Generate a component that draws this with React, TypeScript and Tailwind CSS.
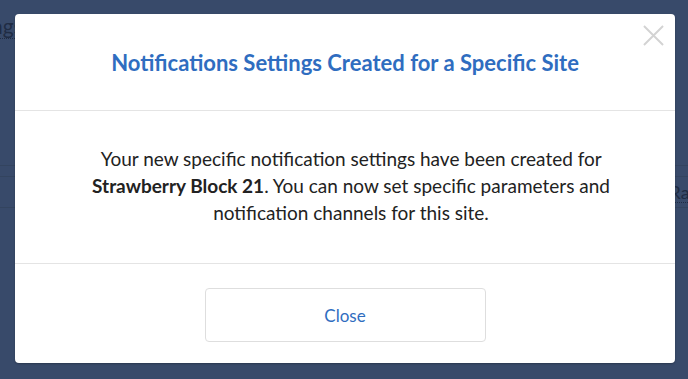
export default function App() {
  return (
    <div
      className="relative h-[379px] w-[688px] overflow-hidden bg-[#384a6a]"
      style={{ fontFamily: "Lato, 'Noto Sans', sans-serif" }}
    >
      {/* page behind the overlay */}
      <div className="flex h-full flex-col">
        <div className="flex h-[52px] items-center">
          <span className="-ml-[9px] border-b border-dotted border-[#1f2c44] text-[21px] leading-[24px] text-[#1f2c44]">
            ngs
          </span>
        </div>
        <div className="h-[114px] border-b border-[#33445f]" />
        <div className="flex h-[11px] border-b border-[#33445f]" />
        <div className="flex h-[31px] items-center justify-end border-b border-[#33445f]">
          <span className="-mr-[8px] border-b border-dotted border-[#1f2c44] text-[18px] leading-[20px] text-[#1f2c44]">
            Rat
          </span>
        </div>
      </div>

      {/* modal */}
      <div className="absolute left-[15px] top-[14px] flex h-[349px] w-[660px] flex-col rounded-[4px] bg-white shadow-[0_1px_2px_rgba(0,0,0,0.25)]">
        <button className="absolute right-[11px] top-[11px] h-[21px] w-[21px] text-[#d3d3d3]">
          <svg viewBox="0 0 22 22" className="h-full w-full" fill="none" stroke="currentColor" strokeWidth="2">
            <path d="M1 1 L21 21 M21 1 L1 21" />
          </svg>
        </button>
        <div className="flex h-[97px] items-center justify-center border-b border-[#e4e4e4]">
          <h2 className="text-[22px] font-bold text-[#2f6dc0]">
            Notifications Settings Created for a Specific Site
          </h2>
        </div>
        <div className="flex h-[153px] items-center justify-center border-b border-[#e4e4e4] pb-[4px] pl-[12px]">
          <p className="w-[560px] text-center text-[19px] leading-[27px] text-[#222]">
            Your new specific notification settings have been created for{" "}
            <b className="font-bold">Strawberry Block 21</b>. You can now set specific parameters and
            notification channels for this site.
          </p>
        </div>
        <div className="flex flex-1 items-start justify-center pt-[24px]">
          <button className="h-[54px] w-[281px] rounded-[4px] border border-[#dedede] bg-white pt-[2px] text-[17px] text-[#2f6dc0]">
            Close
          </button>
        </div>
      </div>
    </div>
  );
}
